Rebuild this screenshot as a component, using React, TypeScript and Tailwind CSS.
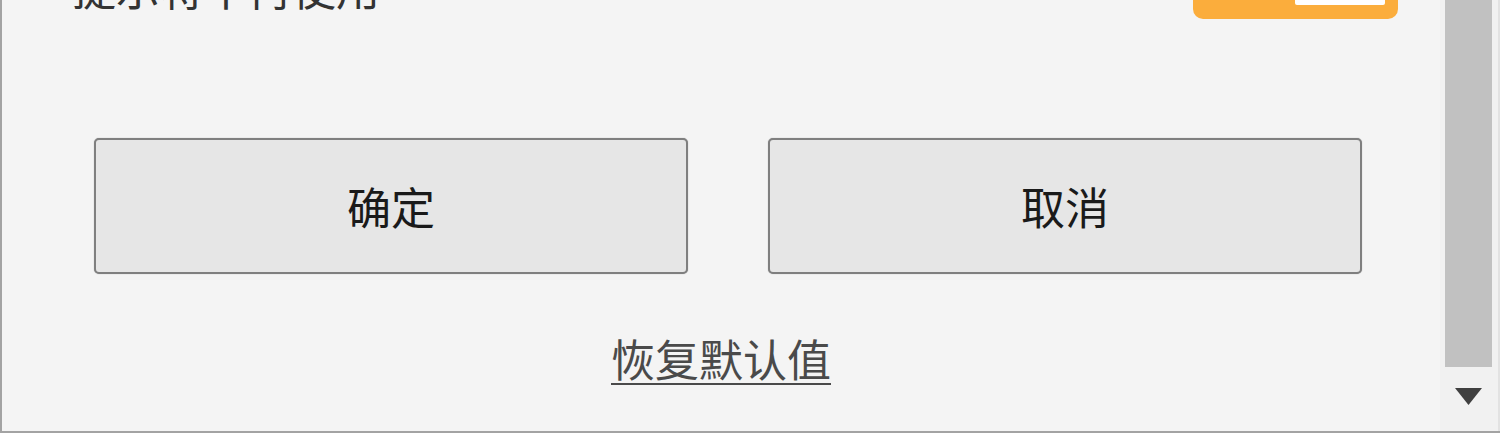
export default function App() {
  return (
    <div
      className="flex h-[433px] w-[1500px] overflow-hidden border-b-2 border-l-2 border-[#a3a3a3] bg-[#f4f4f4]"
      style={{ fontFamily: '"Noto Sans CJK SC", "Noto Sans", sans-serif' }}
    >
      {/* Main panel */}
      <div className="flex flex-1 flex-col">
        {/* Top row, mostly scrolled out of view */}
        <div className="-mt-[41px] flex h-[60px] items-end justify-between pl-[70px] pr-[42px]">
          <span className="mb-[10px] text-[44px] leading-none text-[#333333]">提示将不再使用</span>
          <div className="flex h-[60px] w-[205px] items-end justify-end rounded-b-[10px] bg-[#fbad3c] pb-[14px] pr-[13px]">
            <div className="h-[30px] w-[90px] rounded-[2px] bg-white" />
          </div>
        </div>

        {/* Buttons */}
        <div className="mt-[119px] flex gap-[80px] pl-[92px]">
          <button className="flex h-[136px] w-[594px] items-center justify-center rounded-[5px] border-2 border-[#7f7f7f] bg-[#e6e6e6] text-[44px] text-[#1a1a1a] shadow-[0_0_1px_#999]">
            确定
          </button>
          <button className="flex h-[136px] w-[594px] items-center justify-center rounded-[5px] border-2 border-[#7f7f7f] bg-[#e6e6e6] text-[44px] text-[#1a1a1a] shadow-[0_0_1px_#999]">
            取消
          </button>
        </div>

        {/* Restore defaults */}
        <div className="mt-[62px] flex justify-center">
          <a className="text-[44px] leading-none text-[#4a4a4a] underline decoration-2 underline-offset-[6px]">
            恢复默认值
          </a>
        </div>
      </div>

      {/* Scrollbar */}
      <div className="flex w-[60px] flex-col border-r-2 border-[#e2e2e2] bg-[#f1f1f1] pl-[5px] pr-[6px]">
        <div className="h-[367px] bg-[#c1c1c1]" />
        <div className="flex flex-1 justify-center pt-[21px]">
          <svg width="27" height="17" viewBox="0 0 27 17">
            <polygon points="0,0 27,0 13.5,17" fill="#404040" />
          </svg>
        </div>
      </div>
    </div>
  )
}
